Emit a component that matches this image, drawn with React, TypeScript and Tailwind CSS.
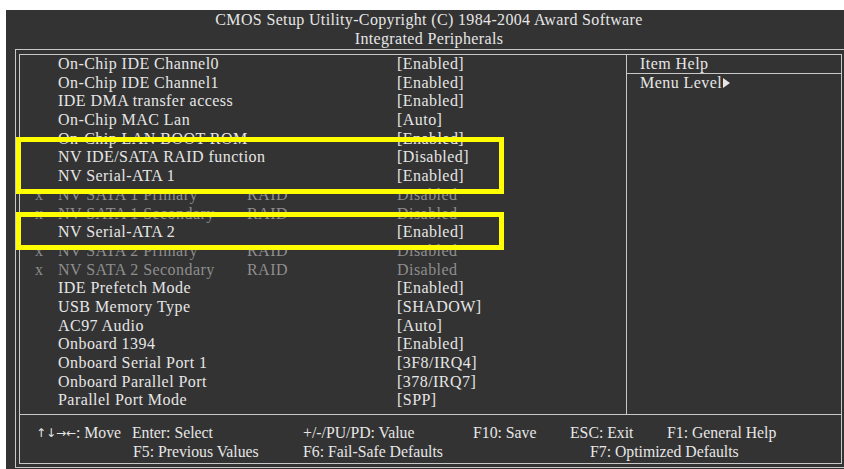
const rows: { label: string; value: string; off?: boolean }[] = [
  { label: 'On-Chip IDE Channel0', value: '[Enabled]' },
  { label: 'On-Chip IDE Channel1', value: '[Enabled]' },
  { label: 'IDE DMA transfer access', value: '[Enabled]' },
  { label: 'On-Chip MAC Lan', value: '[Auto]' },
  { label: 'On-Chip LAN BOOT ROM', value: '[Enabled]' },
  { label: 'NV IDE/SATA RAID function', value: '[Disabled]' },
  { label: 'NV Serial-ATA 1', value: '[Enabled]' },
  { label: 'NV SATA 1 Primary', value: 'Disabled', off: true },
  { label: 'NV SATA 1 Secondary', value: 'Disabled', off: true },
  { label: 'NV Serial-ATA 2', value: '[Enabled]' },
  { label: 'NV SATA 2 Primary', value: 'Disabled', off: true },
  { label: 'NV SATA 2 Secondary', value: 'Disabled', off: true },
  { label: 'IDE Prefetch Mode', value: '[Enabled]' },
  { label: 'USB Memory Type', value: '[SHADOW]' },
  { label: 'AC97 Audio', value: '[Auto]' },
  { label: 'Onboard 1394', value: '[Enabled]' },
  { label: 'Onboard Serial Port 1', value: '[3F8/IRQ4]' },
  { label: 'Onboard Parallel Port', value: '[378/IRQ7]' },
  { label: 'Parallel Port Mode', value: '[SPP]' },
];

const SetupRow = ({ label, value, off }: { label: string; value: string; off?: boolean }) => (
  <div className={`flex h-[18.7px] items-center ${off ? 'text-[#8e8e8e]' : ''}`}>
    <span className="w-[38px] pl-[15px]">{off ? 'x' : ''}</span>
    <span className="w-[189px] whitespace-nowrap">{label}</span>
    <span className="w-[150px]">{off ? 'RAID' : ''}</span>
    <span className="whitespace-nowrap">{value}</span>
  </div>
);

// footer item, narrow serif like the original BIOS font
const Key = ({ w, children }: { w?: string; children: React.ReactNode }) => (
  <span className={`${w ?? ''} inline-block whitespace-nowrap`}>
    <span className="inline-block origin-left scale-x-[0.9] text-[17.5px]">{children}</span>
  </span>
);

export default function App() {
  return (
    <div className="h-[469px] w-[844px] overflow-hidden bg-white pl-[6px] pt-[10px]">
      <div className="relative h-[459px] overflow-hidden bg-[#333333] font-['Liberation_Serif',serif] text-[16px] tracking-[0.45px] text-[#e6e6e6]">
        <div className="pl-[8px] text-center leading-[19px] tracking-[0.35px]">
          <div>CMOS Setup Utility-Copyright (C) 1984-2004 Award Software</div>
          <div>Integrated Peripherals</div>
        </div>

        <div className="ml-[9px] mt-[1px] h-[419px] w-[840px] border border-[#c8c8c8] pb-[3px] pl-[3px] pt-[4px]">
          <div className="flex h-[410px] w-[823px] flex-col border border-[#c8c8c8]">
            <div className="flex h-[360px] border-b border-[#c8c8c8]">
              <div className="w-[607px] border-r border-[#c8c8c8] leading-[18.7px]">
                {rows.map((r, i) => (
                  <SetupRow key={i} {...r} />
                ))}
              </div>
              <div className="flex-1">
                <div className="h-[19px] border-b border-[#c8c8c8] pl-[13px] leading-[18px]">Item Help</div>
                <div className="flex items-center pl-[13px] leading-[18px]">
                  Menu Level
                  <svg width="7" height="10" viewBox="0 0 7 10" className="ml-[1px]">
                    <path d="M0 0 L7 5 L0 10 Z" fill="#e6e6e6" />
                  </svg>
                </div>
              </div>
            </div>

            <div className="pt-[8px] leading-[18px] tracking-normal">
              <div className="flex">
                <span className="ml-[16px] inline-flex w-[96px] items-center whitespace-nowrap">
                  <span className="font-['DejaVu_Sans',sans-serif] text-[12px] tracking-[0px]">↑↓→←</span>
                  <Key>: Move</Key>
                </span>
                <Key w="w-[171px]">Enter: Select</Key>
                <Key w="w-[170px]">+/-/PU/PD: Value</Key>
                <Key w="w-[97px]">F10: Save</Key>
                <Key w="w-[97px]">ESC: Exit</Key>
                <Key>F1: General Help</Key>
              </div>
              <div className="flex">
                <span className="w-[113px]" />
                <Key w="w-[170px]">F5: Previous Values</Key>
                <Key w="w-[287px]">F6: Fail-Safe Defaults</Key>
                <Key>F7: Optimized Defaults</Key>
              </div>
            </div>
          </div>
        </div>

        {/* highlight boxes */}
        <div className="absolute left-[10px] top-[127px] h-[57px] w-[488px] border-[5px] border-[#ffff00]" />
        <div className="absolute left-[10px] top-[202px] h-[38px] w-[488px] border-[5px] border-[#ffff00]" />
      </div>
    </div>
  );
}
